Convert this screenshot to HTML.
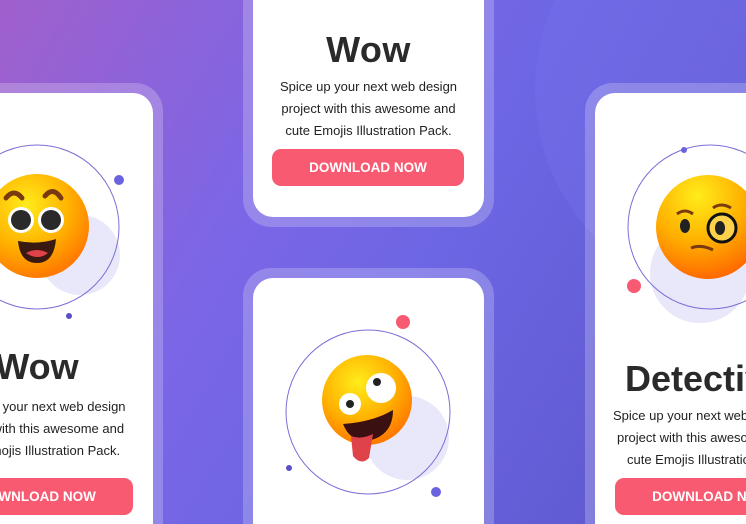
<!DOCTYPE html>
<html><head><meta charset="utf-8"><style>
*{margin:0;padding:0;box-sizing:border-box}
html{width:746px;height:524px;overflow:hidden}
body{width:746px;height:524px;overflow:hidden;position:relative;font-family:"Liberation Sans",sans-serif;
background:linear-gradient(120deg,#a060cc 0%,#7b66e6 35%,#6d66e4 55%,#5b55c9 100%)}
.big{position:absolute;left:535px;top:0;width:211px;height:300px;overflow:hidden}
.big div{position:absolute;left:0;top:-120px;width:420px;height:420px;border-radius:50%;background:rgba(120,115,235,0.35)}
.frame{position:absolute;background:rgba(255,255,255,0.22)}
.card{position:absolute;background:#fff;overflow:hidden}
.abs{position:absolute}
.t{position:absolute;text-align:center;color:#2a2a2a;white-space:nowrap}
.h{font-weight:bold;font-size:36px;letter-spacing:0.5px}
.p{font-size:13px;line-height:22px;color:#222}
.btn{position:absolute;background:#f85a71;border-radius:9px;color:#fff;font-weight:bold;font-size:13.5px;text-align:center;line-height:37px;white-space:nowrap;overflow:hidden}
</style></head><body>
<div class="big"><div></div></div>
<!-- left -->
<div class="frame" style="left:0;top:83px;width:163px;height:441px;border-radius:0 28px 0 0"></div>
<div class="card" style="left:0;top:93px;width:153px;height:431px;border-radius:0 20px 0 0">
<svg class="abs" style="left:-70px;top:0" width="223" height="431">
<defs><radialGradient id="g1" cx="40%" cy="30%" r="70%"><stop offset="0" stop-color="#ffec1a"/><stop offset="0.6" stop-color="#ffb000"/><stop offset="1" stop-color="#ff7a00"/></radialGradient></defs>
<circle cx="150" cy="162" r="40" fill="#e9e8fa"/>
<circle cx="107" cy="134" r="82" fill="none" stroke="#7b6fd6" stroke-width="1"/>
<circle cx="189" cy="87" r="5" fill="#6a63e0"/><circle cx="139" cy="223" r="3" fill="#5a4fc9"/>
<circle cx="107" cy="133" r="52" fill="url(#g1)"/>
<path d="M76 105q8-10 16 0M115 103q8-10 16 2" stroke="#7a3a10" stroke-width="5" fill="none" stroke-linecap="round"/>
<circle cx="91" cy="127" r="13" fill="#fff"/><circle cx="91" cy="127" r="10" fill="#2a2a2a"/>
<circle cx="121" cy="127" r="13" fill="#fff"/><circle cx="121" cy="127" r="10" fill="#2a2a2a"/>
<path d="M88 148q20 4 38-2q-2 24-19 24q-17 0-19-22z" fill="#3a1a10"/><path d="M96 160q11-6 22 0q-10 8-22 0z" fill="#e0424a"/>
<text x="107" y="286" text-anchor="middle" font-family="Liberation Sans" font-weight="bold" font-size="36" fill="#2a2a2a">Wow</text>
<g font-family="Liberation Sans" font-size="13" fill="#222" text-anchor="middle">
<text x="107" y="318">Spice up your next web design</text>
<text x="107" y="340">project with this awesome and</text>
<text x="107" y="362">cute Emojis Illustration Pack.</text></g>
<rect x="11" y="385" width="192" height="37" rx="9" fill="#f85a71"/>
<text x="107" y="408" text-anchor="middle" font-family="Liberation Sans" font-weight="bold" font-size="13.5" fill="#fff">DOWNLOAD NOW</text>
</svg>
</div>
<!-- top center -->
<div class="frame" style="left:243px;top:0;width:251px;height:227px;border-radius:0 0 28px 28px"></div>
<div class="card" style="left:253px;top:0;width:231px;height:217px;border-radius:0 0 20px 20px">
<div class="t h" style="left:0;width:231px;top:29px">Wow</div>
<div class="t p" style="left:0;width:231px;top:76px">Spice up your next web design<br>project with this awesome and<br>cute Emojis Illustration Pack.</div>
<div class="btn" style="left:19px;top:149px;width:192px">DOWNLOAD NOW</div>
</div>
<!-- bottom center -->
<div class="frame" style="left:243px;top:268px;width:251px;height:256px;border-radius:28px 28px 0 0"></div>
<div class="card" style="left:253px;top:278px;width:231px;height:246px;border-radius:20px 20px 0 0">
<svg class="abs" style="left:0;top:0" width="231" height="246">
<defs><radialGradient id="g1b" cx="40%" cy="30%" r="70%"><stop offset="0" stop-color="#ffec1a"/><stop offset="0.6" stop-color="#ffb000"/><stop offset="1" stop-color="#ff7a00"/></radialGradient></defs>
<circle cx="154" cy="160" r="42" fill="#e9e8fa"/>
<circle cx="115" cy="134" r="82" fill="none" stroke="#7b6fd6" stroke-width="1"/>
<circle cx="150" cy="44" r="7" fill="#f85a71"/><circle cx="183" cy="214" r="5" fill="#6a63e0"/><circle cx="36" cy="190" r="3" fill="#5a4fc9"/>
<circle cx="114" cy="122" r="45" fill="url(#g1b)"/>
<circle cx="97" cy="126" r="11" fill="#fff"/><circle cx="97" cy="126" r="4" fill="#222"/>
<circle cx="128" cy="110" r="15" fill="#fff"/><circle cx="124" cy="104" r="4" fill="#222"/>
<path d="M90 146q30-2 50-14q0 24-22 30q-20 4-28-16z" fill="#3a1010"/>
<path d="M98 158q10 4 22-2l-4 24q-8 8-16-2z" fill="#e0424a"/>
</svg>
</div>
<!-- right -->
<div class="frame" style="left:585px;top:83px;width:161px;height:441px;border-radius:28px 0 0 0"></div>
<div class="card" style="left:595px;top:93px;width:151px;height:431px;border-radius:20px 0 0 0">
<svg class="abs" style="left:0;top:0" width="151" height="431">
<defs><radialGradient id="g1c" cx="40%" cy="20%" r="80%"><stop offset="0" stop-color="#ffec1a"/><stop offset="0.55" stop-color="#ffb000"/><stop offset="1" stop-color="#ff6a00"/></radialGradient></defs>
<circle cx="105" cy="180" r="50" fill="#e9e8fa"/>
<circle cx="115" cy="134" r="82" fill="none" stroke="#7b6fd6" stroke-width="1"/>
<circle cx="39" cy="193" r="7" fill="#f85a71"/><circle cx="89" cy="57" r="3" fill="#6a63e0"/>
<circle cx="113" cy="134" r="52" fill="url(#g1c)"/>
<path d="M82 121q8-6 16 0M118 115q8-6 18 0" stroke="#7a3a10" stroke-width="3" fill="none"/>
<ellipse cx="90" cy="133" rx="5" ry="7" fill="#222"/>
<circle cx="127" cy="135" r="14" fill="#ffd24a" stroke="#111" stroke-width="3"/><ellipse cx="125" cy="135" rx="5" ry="7" fill="#222"/>
<path d="M96 155q10-4 22 2" stroke="#7a3a10" stroke-width="3" fill="none"/>
<text x="30" y="298" font-family="Liberation Sans" font-weight="bold" font-size="36" fill="#2a2a2a">Detective</text>
<g font-family="Liberation Sans" font-size="13" fill="#222">
<text x="18" y="327">Spice up your next web design</text>
<text x="22" y="349">project with this awesome and</text>
<text x="32" y="371">cute Emojis Illustration Pack.</text></g>
<rect x="20" y="385" width="192" height="37" rx="9" fill="#f85a71"/>
<text x="116" y="408" text-anchor="middle" font-family="Liberation Sans" font-weight="bold" font-size="13.5" fill="#fff">DOWNLOAD NOW</text>
</svg>
</div>
</body></html>
